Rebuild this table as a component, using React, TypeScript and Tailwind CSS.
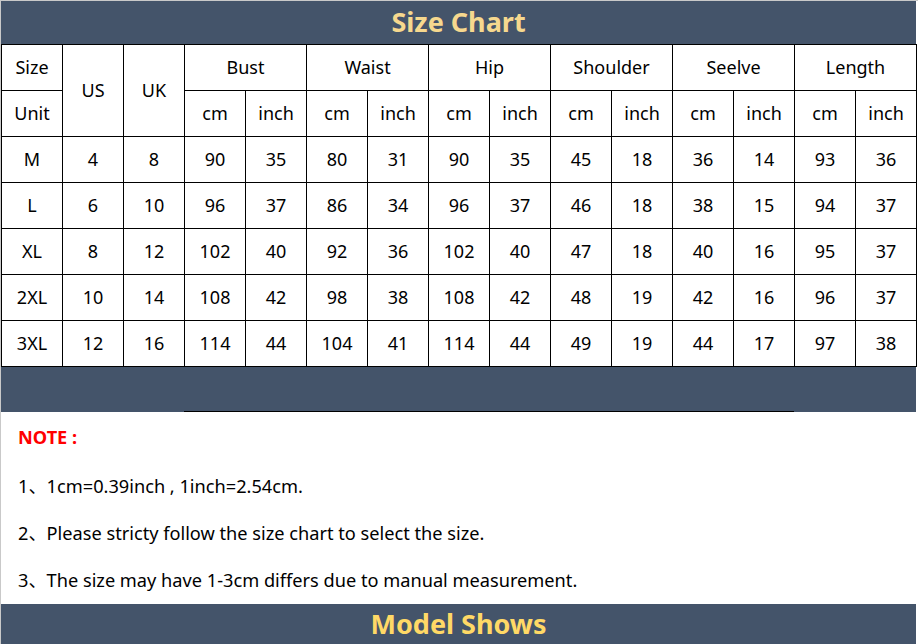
import React from 'react';

const rows = [
  ['M', '4', '8', '90', '35', '80', '31', '90', '35', '45', '18', '36', '14', '93', '36'],
  ['L', '6', '10', '96', '37', '86', '34', '96', '37', '46', '18', '38', '15', '94', '37'],
  ['XL', '8', '12', '102', '40', '92', '36', '102', '40', '47', '18', '40', '16', '95', '37'],
  ['2XL', '10', '14', '108', '42', '98', '38', '108', '42', '48', '19', '42', '16', '96', '37'],
  ['3XL', '12', '16', '114', '44', '104', '41', '114', '44', '49', '19', '44', '17', '97', '38'],
];

const groups = ['Bust', 'Waist', 'Hip', 'Shoulder', 'Seelve', 'Length'];

const notes = [
  '1、1cm=0.39inch , 1inch=2.54cm.',
  '2、Please stricty follow the size chart to select the size.',
  '3、The size may have 1-3cm differs due to manual measurement.',
];

const cell = 'border border-black h-[46px] text-center align-middle p-0';

export default function App() {
  return (
    <div
      className="w-[918px] h-[644px] overflow-hidden bg-white border-t border-l border-[#c9c9c9] text-black text-[18px]"
      style={{ fontFamily: '"Noto Sans", "Open Sans", "Noto Sans CJK SC", sans-serif' }}
    >
      <div className="w-[915px]">
        <div className="h-[43px] bg-[#44546a] flex items-center justify-center">
          <span className="text-[#f6d88e] font-bold text-[27px] leading-none -mt-[2px]">Size Chart</span>
        </div>

        <table className="border-collapse table-fixed w-[915px]">
          <colgroup>
            {Array.from({ length: 15 }).map((_, i) => (
              <col key={i} className="w-[61px]" />
            ))}
          </colgroup>
          <tbody>
            <tr>
              <td className={cell}>Size</td>
              <td rowSpan={2} className={cell}>US</td>
              <td rowSpan={2} className={cell}>UK</td>
              {groups.map((g) => (
                <td key={g} colSpan={2} className={cell}>{g}</td>
              ))}
            </tr>
            <tr>
              <td className={cell}>Unit</td>
              {groups.map((g) => (
                <React.Fragment key={g}>
                  <td className={cell}>cm</td>
                  <td className={cell}>inch</td>
                </React.Fragment>
              ))}
            </tr>
            {rows.map((r) => (
              <tr key={r[0]}>
                {r.map((v, i) => (
                  <td key={i} className={cell}>{v}</td>
                ))}
              </tr>
            ))}
          </tbody>
        </table>

        <div className="h-[45px] bg-[#44546a] flex items-end">
          <div className="ml-[183px] w-[610px] h-px bg-black" />
        </div>

        <div className="h-[192px] pl-[17px] pt-[13px] text-[18.2px]">
          <div className="text-[#ff0000] font-bold leading-[24px]">NOTE :</div>
          <div className="mt-[25px] flex flex-col gap-[23px]">
            {notes.map((n) => (
              <div key={n} className="leading-[24px]">{n}</div>
            ))}
          </div>
        </div>

        <div className="h-[41px] bg-[#44546a] flex items-center justify-center">
          <span className="text-[#ffd966] font-bold text-[27px] leading-none -mt-[3px]">Model Shows</span>
        </div>
      </div>
    </div>
  );
}
